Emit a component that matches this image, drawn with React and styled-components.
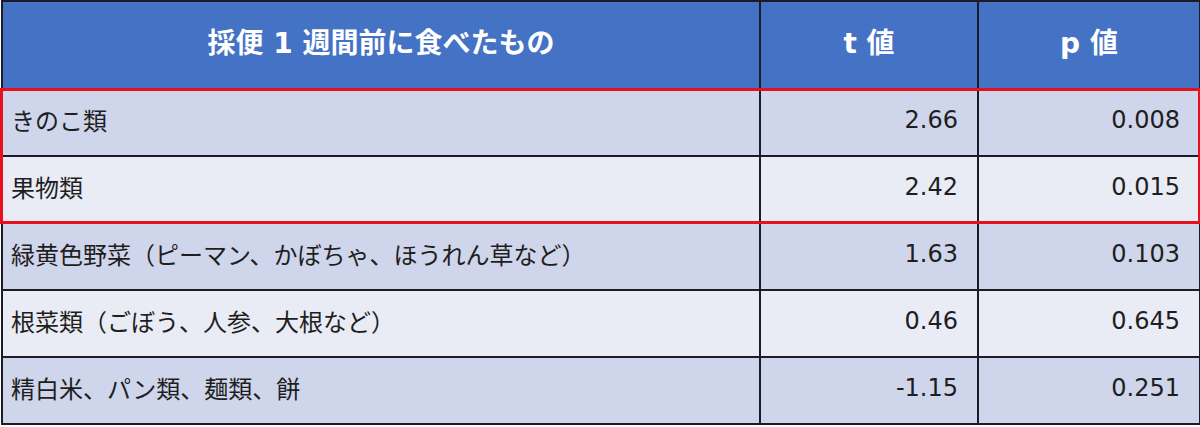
import React from "react";
import styled, { createGlobalStyle } from "styled-components";

const GlobalStyle = createGlobalStyle`
  body {
    margin: 0;
    background: #ffffff;
    font-family: "DejaVu Sans", "Noto Sans CJK JP", sans-serif;
  }
`;

const Table = styled.div`
  width: 1196px;
  margin-left: 1px;
  border: 2px solid #1c1c28;
  border-right-width: 1px;
  background: #ffffff;
`;

const Row = styled.div`
  display: grid;
  grid-template-columns: 758px 218px 1fr;
  height: ${(p) => (p.$head ? "86px" : "65px")};
  border-bottom: 2px solid #1c1c28;
  background: ${(p) =>
    p.$head ? "#4472c4" : p.$even ? "#e9ebf5" : "#cfd5ea"};
  &:last-child {
    border-bottom: none;
  }
`;

const Cell = styled.div`
  display: flex;
  align-items: center;
  justify-content: ${(p) =>
    p.$head ? "center" : p.$num ? "flex-end" : "flex-start"};
  padding: ${(p) =>
    p.$head ? "0 0 8px" : p.$num ? "0 19px 6px 0" : "0 0 6px 8px"};
  border-right: 2px solid #1c1c28;
  color: ${(p) => (p.$head ? "#ffffff" : "#1e1e1e")};
  font-size: ${(p) => (p.$head ? "28px" : "24px")};
  font-weight: ${(p) => (p.$head ? 700 : 400)};
  white-space: nowrap;
  &:last-child {
    border-right: none;
  }
`;

/* red frame drawn over the two highlighted rows */
const Highlight = styled.div`
  position: relative;
  border-bottom: 2px solid #1c1c28;
  & > ${Row}:last-child {
    border-bottom: none;
  }
  &::after {
    content: "";
    position: absolute;
    top: -2px;
    bottom: -2px;
    left: -3px;
    right: -2px;
    border: 3px solid #e8101c;
    pointer-events: none;
  }
`;

const rows = [
  { name: "きのこ類", t: "2.66", p: "0.008" },
  { name: "果物類", t: "2.42", p: "0.015" },
  { name: "緑黄色野菜（ピーマン、かぼちゃ、ほうれん草など）", t: "1.63", p: "0.103" },
  { name: "根菜類（ごぼう、人参、大根など）", t: "0.46", p: "0.645" },
  { name: "精白米、パン類、麺類、餅", t: "-1.15", p: "0.251" },
];

const DataRow = ({ r, i }) => (
  <Row $even={i % 2 === 1}>
    <Cell>{r.name}</Cell>
    <Cell $num>{r.t}</Cell>
    <Cell $num>{r.p}</Cell>
  </Row>
);

export default function App() {
  return (
    <>
      <GlobalStyle />
      <Table>
        <Row $head>
          <Cell $head>採便 1 週間前に食べたもの</Cell>
          <Cell $head>t 値</Cell>
          <Cell $head>p 値</Cell>
        </Row>
        <Highlight>
          {rows.slice(0, 2).map((r, i) => (
            <DataRow key={r.name} r={r} i={i} />
          ))}
        </Highlight>
        {rows.slice(2).map((r, i) => (
          <DataRow key={r.name} r={r} i={i + 2} />
        ))}
      </Table>
    </>
  );
}
